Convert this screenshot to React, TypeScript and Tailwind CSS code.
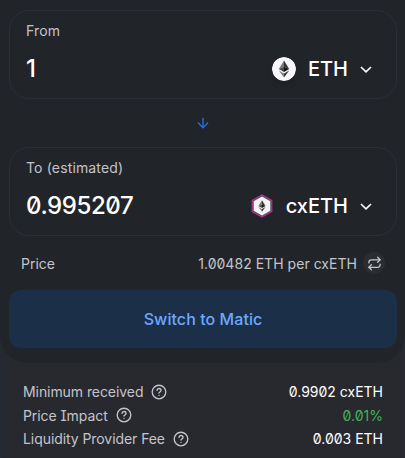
import { ArrowDown, Repeat } from 'lucide-react';

const EthGlyph = () => (
  <g>
    <path d="M12 3.5 L6.8 12 L12 9.7 Z" fill="#777777" />
    <path d="M12 3.5 L17.2 12 L12 9.7 Z" fill="#353535" />
    <path d="M6.8 12 L12 9.7 L12 15 Z" fill="#484848" />
    <path d="M17.2 12 L12 9.7 L12 15 Z" fill="#171717" />
    <path d="M6.8 13.4 L12 16.5 L12 20.5 Z" fill="#818181" />
    <path d="M17.2 13.4 L12 16.5 L12 20.5 Z" fill="#3a3a3a" />
  </g>
);

const EthLogo = () => (
  <svg width="24" height="24" viewBox="0 0 24 24" className="rounded-full shadow-md">
    <circle cx="12" cy="12" r="12" fill="#f6f6fb" />
    <EthGlyph />
  </svg>
);

const CxEthLogo = () => (
  <svg width="24" height="24" viewBox="0 0 24 24">
    <path d="M12 0.2 L22.4 6.1 V17.9 L12 23.8 L1.6 17.9 V6.1 Z" fill="#a93582" />
    <path d="M12 1.7 L21.1 6.9 V17.1 L12 22.3 L2.9 17.1 V6.9 Z" fill="#514a5c" />
    <path d="M12 2.6 L20.3 7.3 V16.7 L12 21.4 L3.7 16.7 V7.3 Z" fill="#f2f3f5" />
    <g transform="translate(3.8 3.8) scale(0.68)">
      <EthGlyph />
    </g>
  </svg>
);

const Chevron = () => (
  <svg width="12" height="7" viewBox="0 0 12 7" fill="none" stroke="#fff" strokeWidth="1.6" className="ml-3">
    <path d="M0.97 1 L6 5.8 L11.03 1" />
  </svg>
);

const HelpIcon = () => (
  <svg width="16" height="16" viewBox="0 0 16 16" fill="none" stroke="#c3c5cb" strokeWidth="1.35" strokeLinecap="round">
    <circle cx="8" cy="8" r="6.8" />
    <path d="M6 6.4 C6.2 3.8 10 4 10 6.4 C10 7.8 8 8 8 9.1" />
    <path d="M8 11.3 V11.4" />
  </svg>
);

type FieldProps = {
  label: string;
  amount: string;
  symbol: string;
  logo: React.ReactNode;
};

const CurrencyField = ({ label, amount, symbol, logo }: FieldProps) => (
  <div className="h-[89px] rounded-[20px] border border-[#2c2f36] px-4 pt-3">
    <div className="text-[14px] leading-4 tracking-[0.15px] text-[#c3c5cb]">{label}</div>
    <div className="mt-[14px] flex h-8 items-center justify-between text-white">
      <span className="text-[24px] leading-8 font-medium tracking-[-0.4px]">{amount}</span>
      <div className="flex items-center pr-2">
        {logo}
        <span className="ml-3 text-[20px] leading-6 font-[450]">{symbol}</span>
        <Chevron />
      </div>
    </div>
  </div>
);

const details = [
  { label: 'Minimum received', value: '0.9902 cxETH', color: 'text-white' },
  { label: 'Price Impact', value: '0.01%', color: 'text-[#42b35c]' },
  { label: 'Liquidity Provider Fee', value: '0.003 ETH', color: 'text-white' },
];

export default function App() {
  return (
    <div className="h-[458px] w-[405px] overflow-hidden bg-[#28292f] font-['Inter',sans-serif] shadow-[inset_3px_0_2px_-1px_#242a34,inset_-3px_0_2px_-1px_#2b2c33] [font-feature-settings:'ss02','zero']">
      <div className="h-[363px] rounded-b-[28px] bg-[#212429] pt-[10px] pr-2 pl-[9px]">
        <CurrencyField label="From" amount="1" symbol="ETH" logo={<EthLogo />} />
        <div className="flex h-12 items-center justify-center pb-px">
          <ArrowDown size={16} strokeWidth={2} className="text-[#2172e5]" />
        </div>
        <CurrencyField label="To (estimated)" amount="0.995207" symbol="cxETH" logo={<CxEthLogo />} />

        <div className="flex h-[54px] items-center justify-between px-3 text-[14px] text-[#c3c5cb]">
          <span>Price</span>
          <div className="flex items-center gap-[6px]">
            <span className="tracking-[0.03px]">1.00482 ETH per cxETH</span>
            <span className="flex size-[22px] items-center justify-center rounded-full bg-[#2a2d32]">
              <Repeat size={15} strokeWidth={2} />
            </span>
          </div>
        </div>

        <button className="h-[58px] w-full rounded-xl bg-[#1b2f49] text-[16px] font-medium tracking-[0.06px] text-[#6da8ff]">
          Switch to Matic
        </button>
      </div>

      <div className="flex flex-col pt-[17px] pr-[22px] pl-[23px] text-[14px]">
        {details.map((row) => (
          <div key={row.label} className="flex h-[23.5px] items-center justify-between">
            <div className="flex items-center gap-2 text-[#c3c5cb]">
              <span className="tracking-[-0.07px]">{row.label}</span>
              <HelpIcon />
            </div>
            <span className={row.color}>{row.value}</span>
          </div>
        ))}
      </div>
    </div>
  );
}
